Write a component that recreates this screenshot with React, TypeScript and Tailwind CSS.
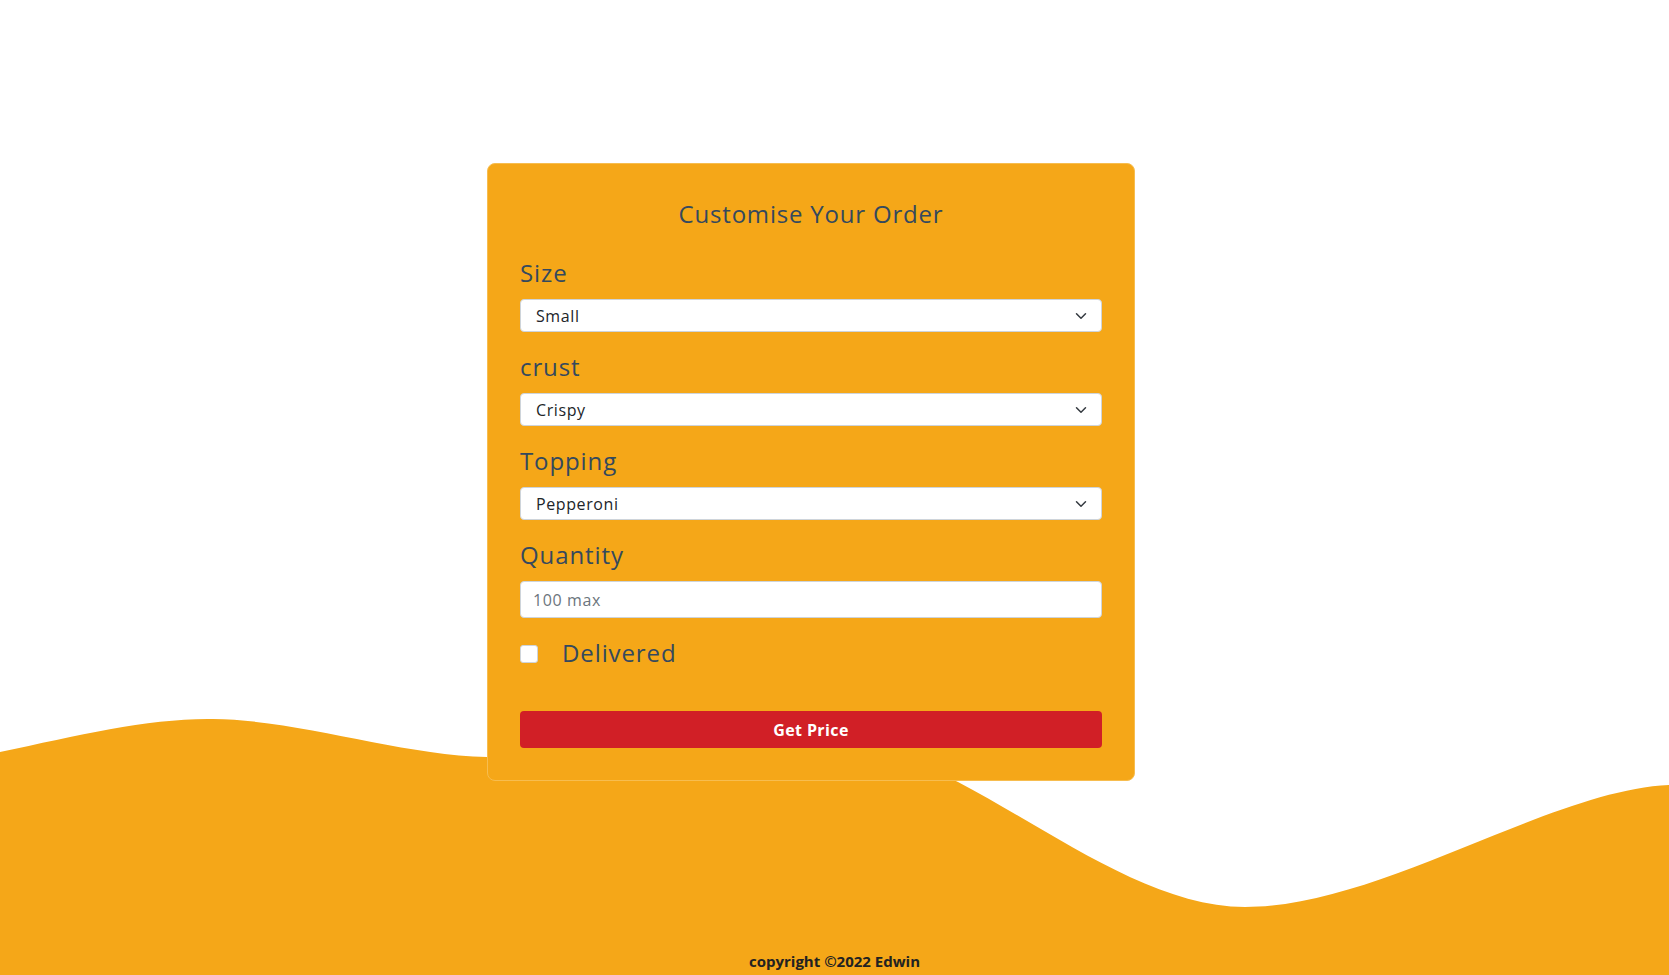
import { useState } from 'react';

const Chevron = () => (
  <svg
    className="pointer-events-none absolute right-[15px] top-1/2 -translate-y-1/2"
    width="12"
    height="12"
    viewBox="0 0 16 16"
    fill="none"
    stroke="#343a40"
    strokeWidth="2"
    strokeLinecap="round"
    strokeLinejoin="round"
  >
    <path d="M2 5l6 6 6-6" />
  </svg>
);

const SelectField = ({ label, options }: { label: string; options: string[] }) => (
  <div className="mb-[20px]">
    <label className="block text-[24px] leading-[29px] tracking-[0.9px] text-[#34495e] mb-[12px]">{label}</label>
    <div className="relative">
      <select className="w-full h-[33px] appearance-none rounded-[4px] border border-[#ced4da] bg-white pl-[15px] pr-10 text-[16px] tracking-[0.6px] text-[#212529] outline-none">
        {options.map((o) => (
          <option key={o}>{o}</option>
        ))}
      </select>
      <Chevron />
    </div>
  </div>
);

const App = () => {
  const [delivered, setDelivered] = useState(false);

  return (
    <div
      className="relative min-h-screen h-[975px] overflow-hidden bg-white"
      style={{ fontFamily: '"Open Sans", "Liberation Sans", sans-serif' }}
    >
      {/* background wave */}
      <svg
        className="absolute inset-0 w-full h-full"
        viewBox="0 0 1669 975"
        preserveAspectRatio="none"
      >
        <path
          fill="#f5a718"
          d="M0,752 C80,735 150,718 213,719 C300,720 400,755 487,757 C600,760 866,734 958,782 C1050,830 1150,907 1245,907 C1380,907 1550,790 1669,785 L1669,975 L0,975 Z"
        />
      </svg>

      <div className="relative z-10 pt-[163px] pl-[487px]">
        <form
          className="w-[648px] rounded-[8px] border border-[#f7bd4f] bg-[#f5a718] px-[32px] pt-[35px] pb-[32px]"
          onSubmit={(e) => e.preventDefault()}
        >
          <h2 className="text-center text-[24px] leading-[29px] tracking-[0.8px] text-[#34495e] mb-[30px]">
            Customise Your Order
          </h2>

          <SelectField label="Size" options={['Small', 'Medium', 'Large']} />
          <SelectField label="crust" options={['Crispy', 'Thin', 'Stuffed']} />
          <SelectField label="Topping" options={['Pepperoni', 'Mushroom', 'Sausage']} />

          <div className="mb-[20px]">
            <label className="block text-[24px] leading-[29px] tracking-[0.9px] text-[#34495e] mb-[12px]">Quantity</label>
            <input
              type="number"
              placeholder="100 max"
              className="w-full h-[37px] rounded-[4px] border border-[#ced4da] bg-white px-[12px] text-[16px] tracking-[0.6px] text-[#212529] placeholder:text-[#6c757d] outline-none"
            />
          </div>

          <label className="flex items-center h-[29px]">
            <input
              type="checkbox"
              checked={delivered}
              onChange={() => setDelivered(!delivered)}
              className="mt-[3px] w-[18px] h-[18px] appearance-none rounded-[3px] border border-[#ced4da] bg-white"
            />
            <span className="ml-[24px] text-[24px] leading-[29px] tracking-[0.9px] text-[#34495e]">Delivered</span>
          </label>

          <button
            type="submit"
            className="mt-[44px] w-full h-[37px] rounded-[4px] bg-[#d11f26] text-[16px] font-bold tracking-[0.4px] text-white"
          >
            Get Price
          </button>
        </form>
      </div>

      <footer className="absolute bottom-0 left-0 right-0 z-10 pb-[3px] text-center">
        <p className="text-[15px] font-bold leading-[22px] text-[#222]">copyright ©2022 Edwin</p>
      </footer>
    </div>
  );
};

export default App;
